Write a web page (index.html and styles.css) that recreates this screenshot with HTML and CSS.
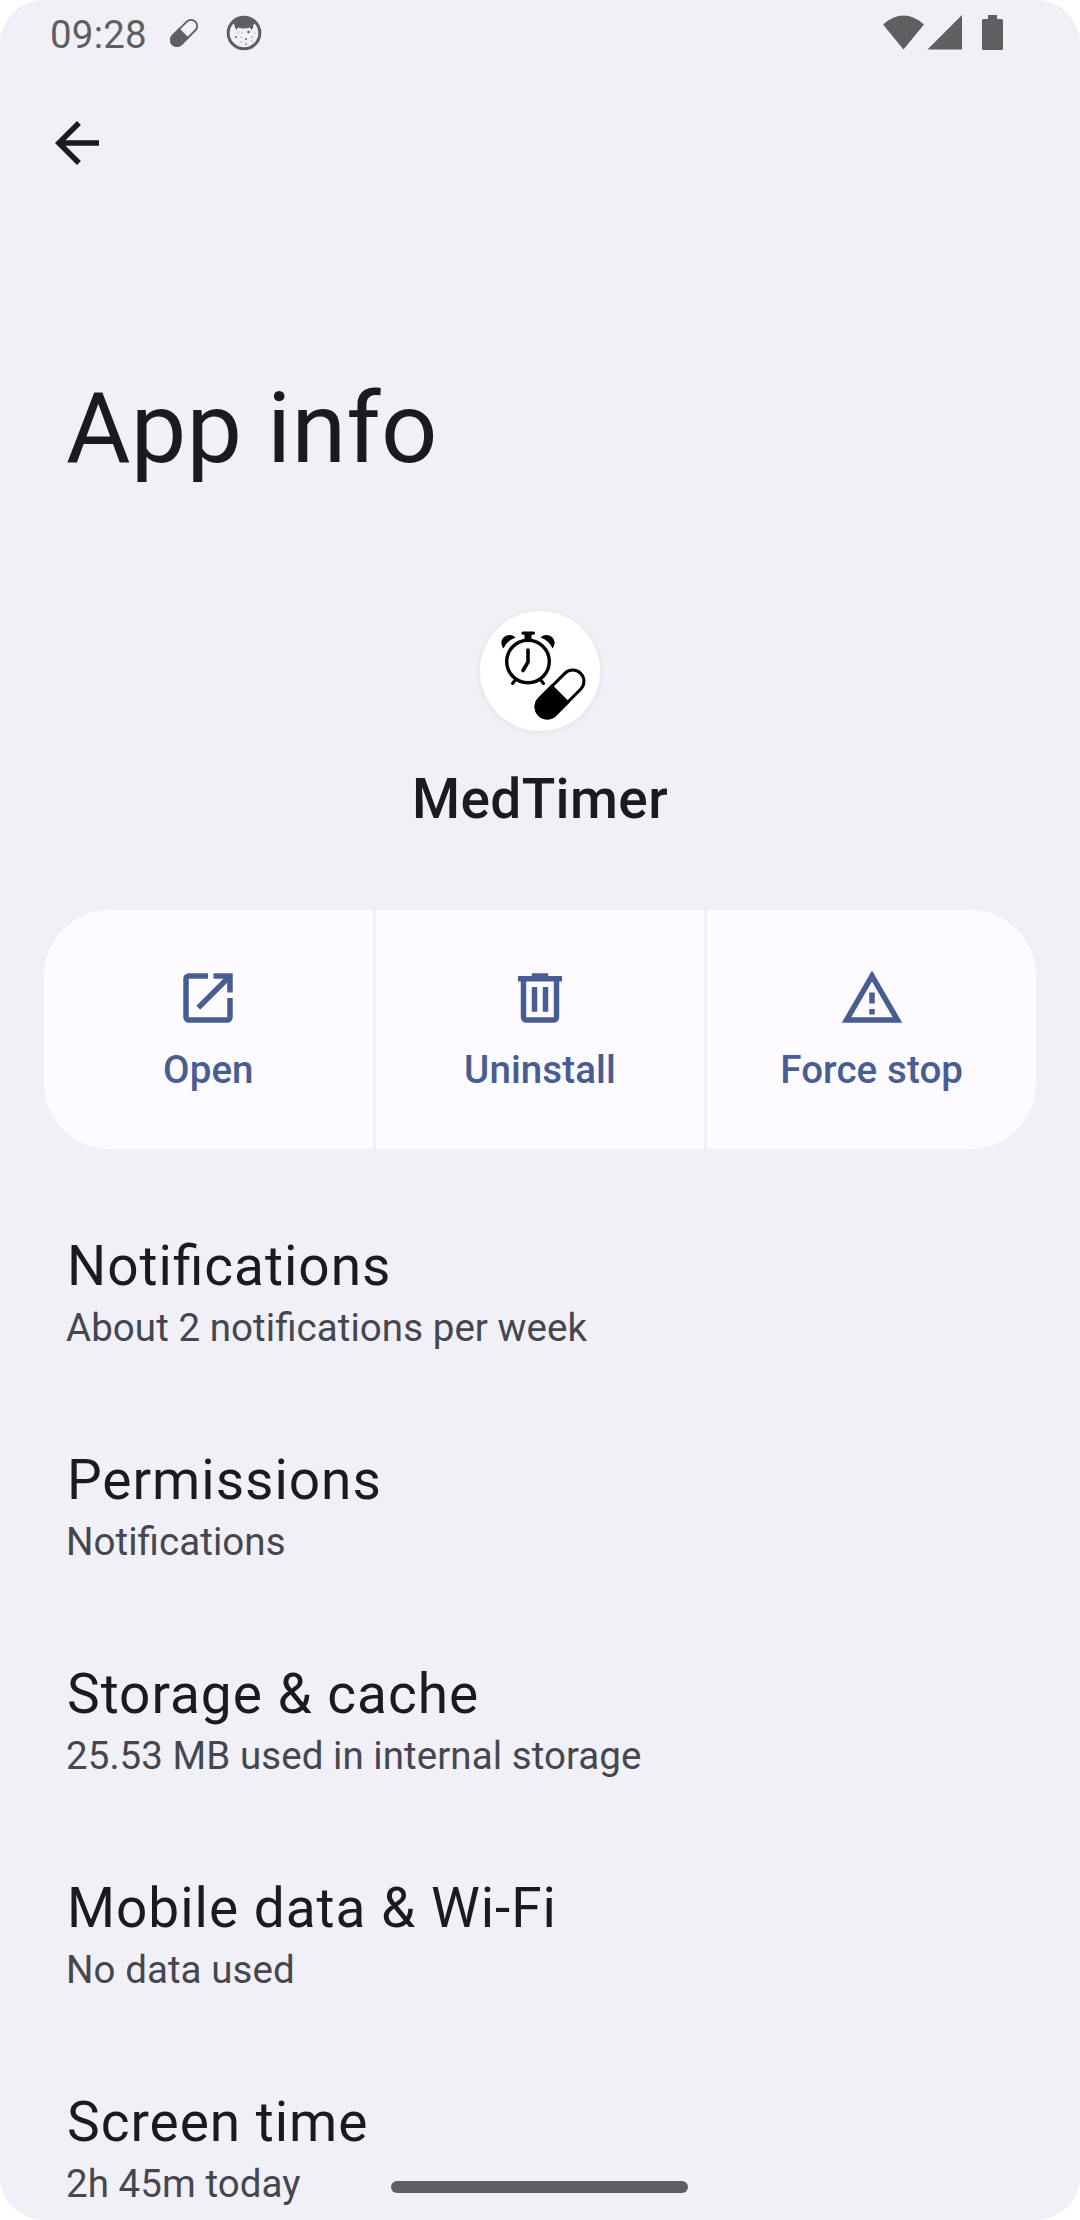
FILE: index.html
```html
<!DOCTYPE html>
<html lang="en">
<head>
<meta charset="utf-8">
<title>App info</title>
<link rel="stylesheet" href="styles.css">
</head>
<body>
<div class="screen">
  <header class="status-bar">
    <span class="clock">09:28</span>
    <svg class="status-pill" viewBox="0 0 30 30"><g transform="rotate(45 15 15)"><rect x="8.900" y="-1.100" width="12.200" height="32.200" rx="6.100" fill="none" stroke="currentColor" stroke-width="1.800"/><path d="M8 15h14v10a7 7 0 0 1-14 0z" fill="currentColor"/></g></svg>
    <svg class="status-cat" viewBox="0 0 36 36"><circle cx="18" cy="18" r="15.800" fill="none" stroke="currentColor" stroke-width="3"/><path d="M6 8Q18-3 30 8L27.500 9.500Q27.500 13 25.500 15L24 12.500Q18 14.500 12 12.500L10.500 15Q8 12 8.500 9.500z" fill="currentColor"/><g fill="currentColor"><circle cx="22.500" cy="17" r="1.300"/><circle cx="10" cy="22" r="1"/><circle cx="20" cy="24" r="1"/><circle cx="12" cy="17" r=".6"/><circle cx="16" cy="18" r=".5"/><circle cx="15" cy="22" r=".6"/><circle cx="26" cy="22" r=".7"/><circle cx="20" cy="29" r=".8"/><circle cx="15" cy="27" r=".6"/><circle cx="26" cy="26" r=".6"/><circle cx="29" cy="18" r=".5"/></g></svg>
    <svg class="status-signals" viewBox="0 0 122 36" fill="currentColor"><path d="M0 9.500Q20.500-8.500 41 9.500L20.500 34.500z"/><path d="M44.500 34.500 79 0V34.500z"/><path d="M105 0h9v4h4.500q1.500 0 1.500 1.500v28q0 1.500-1.500 1.500h-18q-1.500 0-1.500-1.500v-28q0-1.500 1.500-1.500h4.500z"/></svg>
  </header>
  <nav class="toolbar">
    <svg class="back" viewBox="0 0 24 24" fill="currentColor"><path d="M20 11H7.830l5.590-5.590L12 4l-8 8 8 8 1.410-1.410L7.830 13H20z"/></svg>
  </nav>
  <h1 class="title">App info</h1>
  <section class="app">
    <svg class="app-icon" viewBox="0 0 120 120">
      <circle cx="48" cy="50.500" r="21.300" fill="none" stroke="#000" stroke-width="3.400"/>
      <path d="M48 39v12l-5 8.500" fill="none" stroke="#000" stroke-width="3.600" stroke-linecap="round" stroke-linejoin="round"/>
      <path d="M43 20.500h10.500a1.500 1.500 0 0 1 0 3.200H51.500V30h-7v-6.300H43a1.500 1.500 0 0 1 0-3.200z"/>
      <path d="M23.500 37.500C18.500 31 23 24 30 24q3.500 0 5.500 2.500Q27 29.500 23.500 37.500zM72.500 37.500C77.500 31 73 24 66 24q-3.500 0-5.500 2.500Q69 29.500 72.500 37.500z"/>
      <path d="m36 68-3.500 4.500M60 68l3.500 4.500" fill="none" stroke="#000" stroke-width="3" stroke-linecap="round"/>
      <g transform="rotate(45 80 83)"><rect x="68.800" y="53.800" width="22.400" height="58.400" rx="11.200" fill="#fff" stroke="#000" stroke-width="3"/><path d="M67.300 82h25.400v19a12.700 12.700 0 0 1-25.400 0z"/></g>
    </svg>
    <h2 class="app-name">MedTimer</h2>
  </section>
  <section class="actions">
    <div class="action">
      <svg class="action-icon" viewBox="0 0 24 24" fill="currentColor"><path d="M12 3H5a2 2 0 0 0-2 2v14a2 2 0 0 0 2 2h14a2 2 0 0 0 2-2v-7h-2v7H5V5h7z"/><path d="M14 3v2h3.590l-9.830 9.830 1.410 1.410L19 6.410V10h2V3z"/></svg>
      <span>Open</span>
    </div>
    <div class="action">
      <svg class="action-icon" viewBox="0 0 24 24" fill="currentColor"><path d="M15 4V3H9v1H4v2h1v13a2 2 0 0 0 2 2h10a2 2 0 0 0 2-2V6h1V4zm2 15H7V6h10zM9 8h2v9H9zm4 0h2v9h-2z"/></svg>
      <span>Uninstall</span>
    </div>
    <div class="action">
      <svg class="action-icon" viewBox="0 0 24 24" fill="currentColor"><path d="M12 5.990 19.530 19H4.470zM12 2 1 21h22zm1 14h-2v2h2zm0-6h-2v4h2z"/></svg>
      <span>Force stop</span>
    </div>
  </section>
  <main class="settings">
    <div class="row"><div class="label">Notifications</div><div class="summary">About 2 notifications per week</div></div>
    <div class="row"><div class="label">Permissions</div><div class="summary">Notifications</div></div>
    <div class="row"><div class="label">Storage &amp; cache</div><div class="summary">25.53 MB used in internal storage</div></div>
    <div class="row"><div class="label">Mobile data &amp; Wi-Fi</div><div class="summary">No data used</div></div>
    <div class="row"><div class="label">Screen time</div><div class="summary">2h 45m today</div></div>
  </main>
  <div class="gesture-bar"></div>
</div>
</body>
</html>
```
FILE: styles.css
```css
* { box-sizing: border-box; }
html { background: #fff; }
body { margin: 0; }
svg { display: block; flex: none; }

.screen {
  position: relative;
  display: flex;
  flex-direction: column;
  width: 1080px;
  height: 2220px;
  overflow: hidden;
  border-radius: 44px;
  background: #f1f0f7;
  color: #1a1b21;
  font-family: Roboto, "Liberation Sans", sans-serif;
}
.screen > * { flex: none; }

.status-bar {
  display: flex;
  align-items: center;
  height: 66px;
  padding: 0 75px 0 50px;
  color: #5f5f61;
}
.clock {
  width: 98px;
  padding-top: 3px;
  font-size: 38.5px;
  line-height: 66px;
  letter-spacing: .2px;
  white-space: nowrap;
}
.status-pill { width: 30px; height: 30px; margin-left: 21px; }
.status-cat { width: 36px; height: 36px; margin-left: 27px; }
.status-signals { width: 122px; height: 36px; margin-left: auto; }

.toolbar { height: 154px; padding: 44px; }
.back { width: 66px; height: 66px; }

.title {
  margin: 150px 0 0;
  padding: 0 66px;
  font-size: 99px;
  line-height: 116px;
  font-weight: 400;
  letter-spacing: .2px;
}

.app { display: flex; flex-direction: column; align-items: center; margin-top: 125px; }
.app-icon {
  width: 120px;
  height: 120px;
  border-radius: 50%;
  background: #fff;
  box-shadow: 0 1px 6px rgba(0, 0, 0, .07);
}
.app-name {
  margin: 35px 0 0;
  font-size: 55px;
  line-height: 66px;
  font-weight: 500;
  letter-spacing: .4px;
}

.actions {
  display: grid;
  grid-template-columns: repeat(3, 1fr);
  gap: 3px;
  height: 239px;
  margin: 78px 44px 0;
  overflow: hidden;
  border-radius: 66px;
}
.action {
  display: flex;
  flex-direction: column;
  align-items: center;
  gap: 16px;
  padding-top: 55px;
  background: #fdfbff;
  color: #485d92;
  font-size: 38.5px;
  line-height: 46px;
  font-weight: 500;
  letter-spacing: .1px;
}
.action-icon { width: 66px; height: 66px; }

.settings { margin-top: 85px; padding: 0 66px; }
.row { height: 214px; }
.label {
  padding-left: 1px;
  font-size: 55px;
  line-height: 64px;
  letter-spacing: .98px;
  font-feature-settings: "liga" 1;
}
.summary {
  margin-top: 7px;
  font-size: 38.5px;
  line-height: 46px;
  letter-spacing: .06px;
  font-feature-settings: "liga" 1;
  color: #45464f;
}

.gesture-bar {
  position: absolute;
  left: 391px;
  top: 2181px;
  width: 297px;
  height: 12px;
  border-radius: 6px;
  background: #5f5f61;
}
```
